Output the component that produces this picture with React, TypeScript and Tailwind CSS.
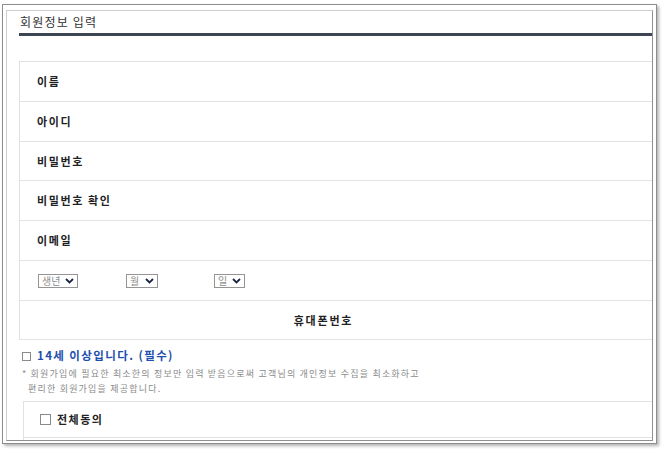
import React from "react";

const font = { fontFamily: '"Noto Sans CJK KR", "Noto Sans", sans-serif' };

function Chevron() {
  return (
    <svg width="9" height="6" viewBox="0 0 9 6" className="shrink-0">
      <polyline points="1,1 4.5,4.5 8,1" fill="none" stroke="#1b2740" strokeWidth="1.8" />
    </svg>
  );
}

function FakeSelect({ label, width }: { label: string; width: string }) {
  return (
    <div className={`flex h-[14px] items-center justify-between border border-[#949494] bg-white pl-[3px] pr-[3px] ${width}`}>
      <span className="text-[10px] leading-none text-[#8d8d8d]">{label}</span>
      <Chevron />
    </div>
  );
}

const rows = [
  { label: "이름", h: "h-[40px]" },
  { label: "아이디", h: "h-[40px]" },
  { label: "비밀번호", h: "h-[39px]" },
  { label: "비밀번호 확인", h: "h-[40px]" },
  { label: "이메일", h: "h-[40px]" },
];

export default function App() {
  return (
    <div className="h-[453px] w-[663px] bg-white pl-[2px] pt-[4px]" style={font}>
      <div className="flex h-[440px] w-[655px] border border-[#8d8d8d] bg-white pb-[2px] pl-[3px] pr-[3px] pt-[5px] shadow-[2px_2px_3px_rgba(0,0,0,0.3)]">
        <div className="flex-1 overflow-hidden border border-t-[#cfcfcf] border-l-[#cfcfcf] border-r-[#8f8f8f] border-b-[#8f8f8f] pl-[12px]">
          {/* title */}
          <div className="flex h-[22px] items-center pl-[1px] text-[12px] tracking-[1.2px] text-[#333]">
            회원정보 입력
          </div>
          <div className="h-[3px] bg-[#3e4552]" />

          {/* form table */}
          <div className="mt-[25px] border-l border-t border-[#e2e2e2]">
            {rows.map((r) => (
              <div
                key={r.label}
                className={`flex items-center border-b border-[#e2e2e2] pl-[17px] text-[11px] font-bold tracking-[1.6px] text-[#222] ${r.h}`}
              >
                {r.label}
              </div>
            ))}
            <div className="flex h-[40px] items-center border-b border-[#e2e2e2] pl-[18px]">
              <FakeSelect label="생년" width="w-[40px]" />
              <div className="ml-[48px]">
                <FakeSelect label="월" width="w-[32px]" />
              </div>
              <div className="ml-[56px]">
                <FakeSelect label="일" width="w-[31px]" />
              </div>
            </div>
            <div className="flex h-[39px] items-center justify-center border-b border-[#e2e2e2] pr-[25px] text-[11px] font-bold tracking-[1.8px] text-[#222]">
              휴대폰번호
            </div>
          </div>

          {/* age check */}
          <div className="ml-[3px] mt-[8px] flex h-[16px] items-center gap-[6px]">
            <span className="h-[9px] w-[9px] border border-[#8a8a8a] bg-white" />
            <span className="text-[11.5px] font-bold tracking-[1.4px] text-[#1d4fae]">
              14세 이상입니다. (필수)
            </span>
          </div>

          {/* notes */}
          <div className="ml-[3px] mt-[2px] text-[9px] leading-[15px] tracking-[1.2px] text-[#8a8a8a]">
            <div>* 회원가입에 필요한 최소한의 정보만 입력 받음으로써 고객님의 개인정보 수집을 최소화하고</div>
            <div className="pl-[6px]">편리한 회원가입을 제공합니다.</div>
          </div>

          {/* agreements */}
          <div className="ml-[4px] mt-[5px] border-l border-t border-[#e2e2e2]">
            <div className="flex h-[36px] items-center gap-[6px] border-b border-[#e2e2e2] pl-[16px]">
              <span className="h-[11px] w-[11px] border border-[#8a8a8a] bg-white" />
              <span className="text-[11px] font-bold tracking-[1.5px] text-[#222]">전체동의</span>
            </div>
            <div className="h-[30px]" />
          </div>
        </div>
      </div>
    </div>
  );
}
